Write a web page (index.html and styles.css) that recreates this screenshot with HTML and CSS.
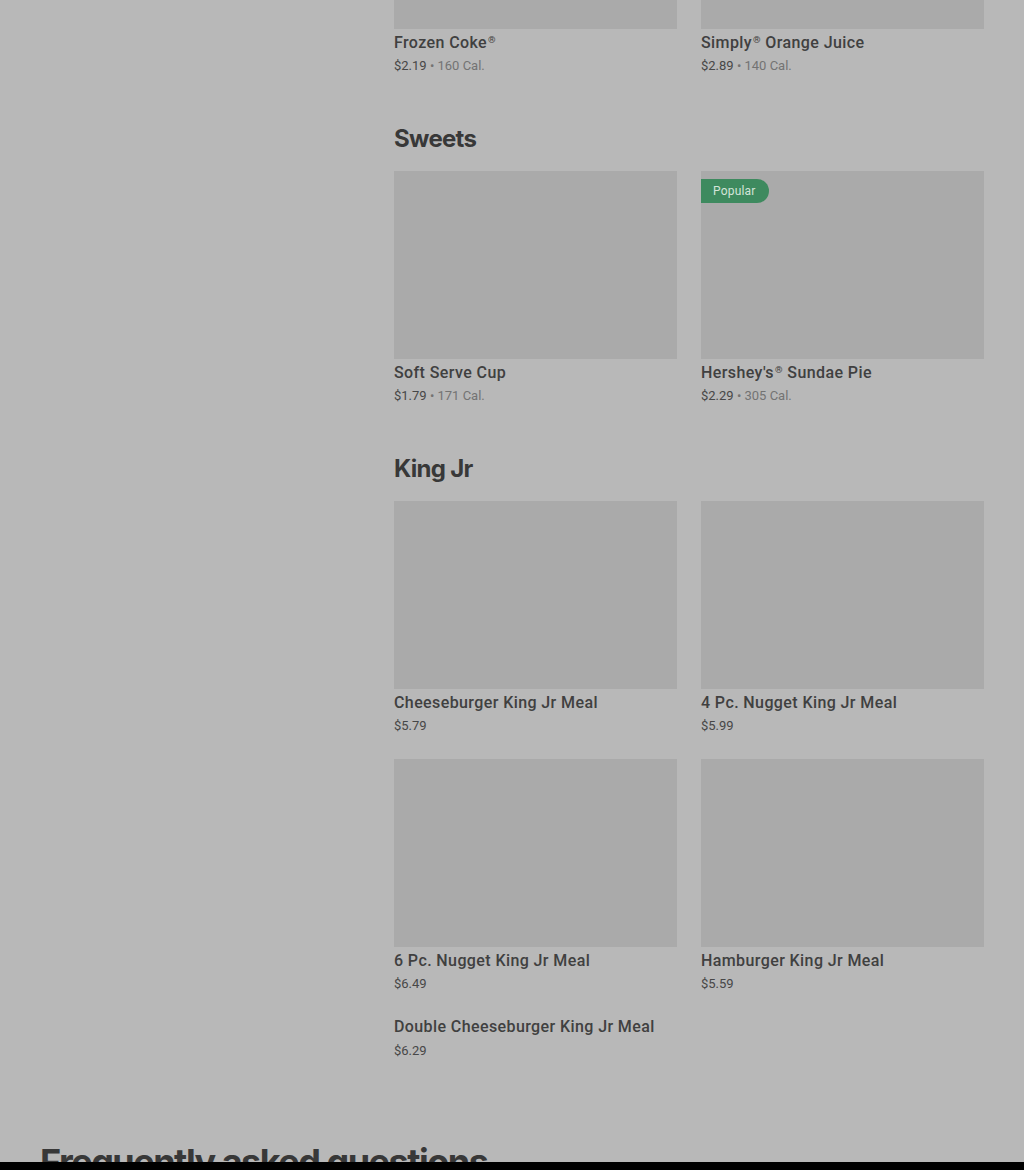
FILE: index.html
```html
<!DOCTYPE html>
<html>
  <head>
    <meta charset="utf-8">
    <meta name="viewport" content="width=device-width, initial-scale=1">
    <title>Burger King - Menu</title>
    <link rel="stylesheet" href="styles.css">
  </head>
  <body>
    <div class="page">
      <aside class="sidebar"></aside>
      <main class="menu">
        <section class="category first">
          <div class="grid">
            <a href="#" class="item">
              <div class="thumb"></div>
              <h3>Frozen Coke<span class="reg">®</span></h3>
              <p class="meta">$2.19 <span class="cal">• 160 Cal.</span></p>
            </a>
            <a href="#" class="item">
              <div class="thumb"></div>
              <h3>Simply<span class="reg">®</span> Orange Juice</h3>
              <p class="meta">$2.89 <span class="cal">• 140 Cal.</span></p>
            </a>
          </div>
        </section>

        <section class="category">
          <h2>Sweets</h2>
          <div class="grid">
            <a href="#" class="item">
              <div class="thumb"></div>
              <h3>Soft Serve Cup</h3>
              <p class="meta">$1.79 <span class="cal">• 171 Cal.</span></p>
            </a>
            <a href="#" class="item">
              <div class="thumb"><span class="badge">Popular</span></div>
              <h3>Hershey's<span class="reg">®</span> Sundae Pie</h3>
              <p class="meta">$2.29 <span class="cal">• 305 Cal.</span></p>
            </a>
          </div>
        </section>

        <section class="category">
          <h2>King Jr</h2>
          <div class="grid">
            <a href="#" class="item">
              <div class="thumb"></div>
              <h3>Cheeseburger King Jr Meal</h3>
              <p class="meta">$5.79</p>
            </a>
            <a href="#" class="item">
              <div class="thumb"></div>
              <h3>4 Pc. Nugget King Jr Meal</h3>
              <p class="meta">$5.99</p>
            </a>
            <a href="#" class="item">
              <div class="thumb"></div>
              <h3>6 Pc. Nugget King Jr Meal</h3>
              <p class="meta">$6.49</p>
            </a>
            <a href="#" class="item">
              <div class="thumb"></div>
              <h3>Hamburger King Jr Meal</h3>
              <p class="meta">$5.59</p>
            </a>
            <a href="#" class="item no-thumb">
              <h3>Double Cheeseburger King Jr Meal</h3>
              <p class="meta">$6.29</p>
            </a>
          </div>
        </section>
      </main>
    </div>

    <section class="faq">
      <h2>Frequently asked questions</h2>
    </section>

    <div class="bottom-bar"></div>
  </body>
</html>
```

FILE: styles.css
```css
body, html {
    padding: 0;
    margin: 0;
    background: #b8b8b8;
    font-family: 'Roboto', 'Liberation Sans', sans-serif;
    color: #3b3b3b;
    overflow: hidden;
}

a {
    text-decoration: none;
    color: inherit;
}

.page {
    display: grid;
    grid-template-columns: 314px 1fr;
    column-gap: 40px;
    padding: 0 40px;
    margin-top: -159px;
}

.category {
    padding-bottom: 48px;
}

.category h2 {
    margin: 0 0 16px;
    font-family: 'Inter', sans-serif;
    font-size: 24px;
    line-height: 32px;
    font-weight: 700;
    letter-spacing: -0.7px;
    color: #383838;
}

.grid {
    display: grid;
    grid-template-columns: 1fr 1fr;
    column-gap: 24px;
    row-gap: 24px;
}

.item {
    display: block;
}

.thumb {
    position: relative;
    height: 188px;
    background: #aaaaaa;
    margin-bottom: 4px;
}

.item h3 {
    margin: 0;
    font-size: 16px;
    line-height: 20px;
    font-weight: 500;
    letter-spacing: 0.4px;
    color: #404040;
}

.reg {
    font-size: 0.6em;
    vertical-align: 0.5em;
    line-height: 0;
    margin-left: 1px;
}

.meta {
    margin: 4px 0 0;
    font-size: 13px;
    line-height: 18px;
    color: #474747;
}

.cal {
    color: #737373;
}

.no-thumb .meta {
    margin-top: 5px;
}

.badge {
    position: absolute;
    top: 8px;
    left: 0;
    height: 24px;
    line-height: 24px;
    padding: 0 13px 0 12px;
    background: #3e8a5f;
    color: #d3e4d9;
    font-size: 12px;
    letter-spacing: 0.2px;
    border-radius: 0 12px 12px 0;
}

.faq {
    padding: 0 40px;
    margin-top: 32px;
}

.faq h2 {
    margin: 0;
    font-family: 'Inter', sans-serif;
    font-size: 36px;
    line-height: 44px;
    font-weight: 700;
    letter-spacing: -1.5px;
    color: #383838;
}

.bottom-bar {
    position: fixed;
    left: 0;
    right: 0;
    bottom: 0;
    height: 8px;
    background: #000;
}
```
